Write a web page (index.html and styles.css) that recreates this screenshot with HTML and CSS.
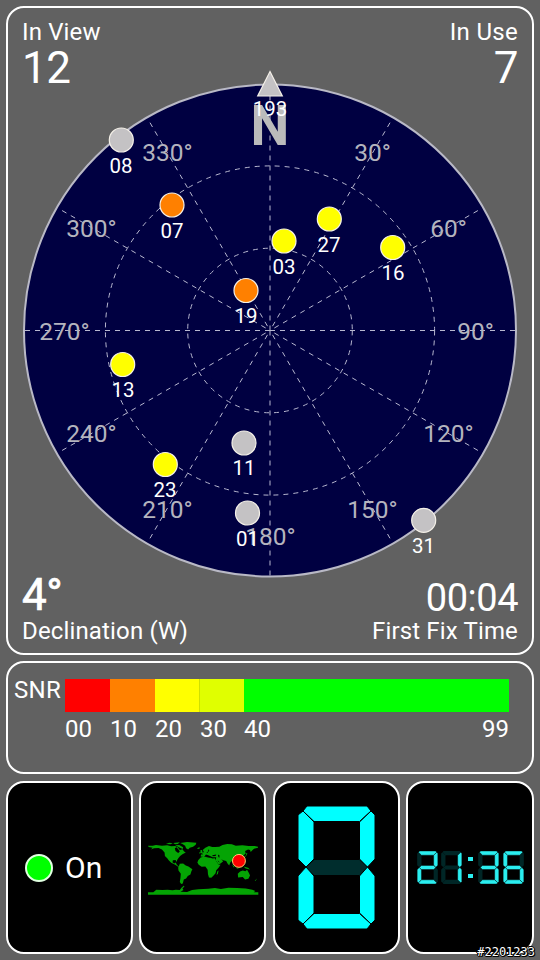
FILE: index.html
```html
<!doctype html>
<html>
  <head>
    <title>GPS Status</title>
    <meta charset="utf-8" />
    <link rel="stylesheet" href="styles.css">
  </head>
  <body>
    <div class="panel sky">
      <svg class="plot" viewBox="8 8 524 645">
        <circle class="disc" cx="270" cy="330.5" r="246" />
        <g class="grid">
          <circle cx="270" cy="330.5" r="82.3" />
          <circle cx="270" cy="330.5" r="164.6" />
          <path d="M270 330.5V84.5M270 330.5V576.5M270 330.5H24M270 330.5H516" />
          <path class="diag" d="M270 330.5L390 122.700M270 330.5L478 210.500M270 330.5L478 450.500M270 330.5L390 538.300" />
          <path class="diag" d="M270 330.5L150 538.300M270 330.5L62 450.500M270 330.5L62 210.500M270 330.5L150 122.700" />
        </g>
        <g class="deg">
          <text class="north" x="270" y="145">N</text>
          <text x="372.500" y="161">30°</text>
          <text x="448.500" y="237">60°</text>
          <text x="475.500" y="340">90°</text>
          <text x="448.500" y="442">120°</text>
          <text x="372.500" y="518">150°</text>
          <text x="270.5" y="545">180°</text>
          <text x="167.500" y="518">210°</text>
          <text x="91.500" y="442">240°</text>
          <text x="64.500" y="340">270°</text>
          <text x="91.500" y="237">300°</text>
          <text x="167.500" y="161">330°</text>
        </g>
        <g class="sat">
          <path class="gray" d="M270 71.500L282.300 96H257.700z" />
          <circle class="gray" cx="121.300" cy="140" r="12" />
          <circle class="orange" cx="172" cy="205" r="12" />
          <circle class="yellow" cx="329.300" cy="219" r="12" />
          <circle class="yellow" cx="284" cy="241" r="12" />
          <circle class="yellow" cx="392.700" cy="247.500" r="12" />
          <circle class="orange" cx="246" cy="290.500" r="12" />
          <circle class="yellow" cx="122.700" cy="364.500" r="12" />
          <circle class="gray" cx="244" cy="443" r="12" />
          <circle class="yellow" cx="165.300" cy="464.500" r="12" />
          <circle class="gray" cx="247.500" cy="513" r="12" />
          <circle class="gray" cx="423.700" cy="520.300" r="12" />
        </g>
        <g class="prn">
          <text x="270" y="116">193</text>
          <text x="121" y="173">08</text>
          <text x="172" y="238">07</text>
          <text x="329" y="252">27</text>
          <text x="284" y="274">03</text>
          <text x="393" y="280">16</text>
          <text x="246" y="323">19</text>
          <text x="123" y="397">13</text>
          <text x="244" y="475">11</text>
          <text x="165" y="497">23</text>
          <text x="247.500" y="546">01</text>
          <text x="423.500" y="553">31</text>
        </g>
      </svg>
      <div class="info top left">
        <span class="label">In View</span>
        <span class="big">12</span>
      </div>
      <div class="info top right">
        <span class="label">In Use</span>
        <span class="big">7</span>
      </div>
      <div class="info bottom left">
        <span class="big decl">4°</span>
        <span class="label">Declination (W)</span>
      </div>
      <div class="info bottom right">
        <span class="big fix">00:04</span>
        <span class="label">First Fix Time</span>
      </div>
    </div>

    <div class="panel snr">
      <span class="name">SNR</span>
      <div class="scale">
        <div class="c0"></div>
        <div class="c10"></div>
        <div class="c20"></div>
        <div class="c30"></div>
        <div class="c40"></div>
        <span>00</span>
        <span>10</span>
        <span>20</span>
        <span>30</span>
        <span class="ends"><b>40</b><b>99</b></span>
      </div>
    </div>

    <div class="tiles">
      <div class="panel tile gps">
        <div class="lamp"></div>
        <span>On</span>
      </div>
      <div class="panel tile">
        <svg class="map" viewBox="20 36 336 160">
          <g class="land">
            <path d="M22 47H36L46 45L64 47L80 46L92 49L104 48L112 52L118 60L126 58L131 65L136 68L126 73L119 78L114 84L110 90L109 96L105 90L97 91L96 97L101 101L106 98L108 103L112 108L116 110L113 111L104 105L92 99L85 92L80 85L73 78L72 68L64 59L54 54L40 55L31 59L36 53L24 51z" />
            <path d="M76 42L86 38L97 40L90 43zM98 39L118 37L112 42L104 43zM104 46L116 45L128 52L127 57L118 53z" />
            <path d="M119 39L140 36L168 38L166 44L158 50L148 53L143 59L137 55L134 47L126 42z" />
            <path d="M118 102L128 101L136 107L144 110L156 118L153 124L150 134L142 139L137 146L130 149L127 161L122 163L118 157L120 144L121 132L114 122L113 114z" />
            <path d="M170 55L177 52L179 55L173 57zM180 61L185 60L187 69L181 70zM177 68L180 66L180 70L176 71z" />
            <path d="M190 65L187 60L195 53L206 48L216 51L225 51L237 50L247 45L261 42L275 43L287 47L307 46L326 48L344 48L354 50V53L342 56L337 61L332 66L330 60L324 59L315 63L317 71L310 77L308 83L304 78L302 86L303 93L296 98L289 100L291 109L286 107L281 98L277 92L271 97L267 107L262 101L258 93L249 91L243 88L249 94L241 101L235 103L226 91L228 82L217 82L211 79L204 76L197 74L191 81L181 80L182 74L189 73L183 69L190 67z" />
            <path d="M181 83L192 80L204 81L217 86L224 85L228 94L235 104L241 105L235 114L228 121L226 130L220 137L213 144L206 143L203 133L202 120L195 110L184 111L175 105L171 98L174 90z" />
            <path d="M231 125L235 122L233 132L229 136zM275 103L284 111L281 113zM286 113L297 115L292 117zM289 104L297 102L298 110L291 110zM301 107L305 108L303 113zM310 110L324 114L330 119L317 116zM315 81L319 77L322 70L318 70L318 76L310 82z" />
            <path d="M293 132L300 125L308 122L316 124L321 120L327 130L330 137L325 147L315 149L308 142L294 143zM344 153L351 146L347 153z" />
            <path d="M22 188L38 188L47 180L66 181L81 180L96 182L106 180L118 181L123 174L130 168L132 170L126 176L129 181L120 186L140 187L155 181L174 179L204 177L224 175L242 178L265 174L291 175L317 176L337 180L346 184L341 188L355 188V195H22z" />
          </g>
          <path class="water" d="M108 52L114 59L118 65L113 69L105 63L103 55zM216 76L228 74L226 78L217 79zM233 74L238 77L237 84L234 80zM201 69L207 62L205 58L203 65L198 69zM232 91L239 98L235 96zM192 80L203 79L212 84L200 82z" />
          <circle class="spot" cx="296.500" cy="93" r="19.500" />
        </svg>
      </div>
      <div class="panel tile">
        <svg class="digit large" data-n="0"></svg>
      </div>
      <div class="panel tile clock">
        <svg class="digit" data-n="2"></svg>
        <svg class="digit" data-n="1"></svg>
        <div class="colon"></div>
        <svg class="digit" data-n="3"></svg>
        <svg class="digit" data-n="6"></svg>
      </div>
    </div>
    <div class="stamp">#2201233</div>

    <script>
     // segments a..g
     var segs = [
       '9,0 69,0 73,5 61.500,15.500 16,15.500 5,5',
       '73,5 77,9 77,53 69.500,61 61.500,53 61.500,16',
       '69.500,61 77,70 77,114 73,118 61.500,107 61.500,70',
       '16,107.500 61.500,107.500 73,118 69,123 9,123 5,118',
       '0,70 8,61 16,70 16,107 5,118 0,114',
       '0,9 5,5 16,16 16,53 8,61 0,53',
       '16,54 61.500,54 69.500,61.500 61.500,69 16,69 8,61.500'
     ];
     var digits = ['1111110', '0110000', '1101101', '1111001', '0110011',
                   '1011011', '1011111', '1110000', '1111111', '1111011'];

     var list = document.querySelectorAll('.digit');
     for(var i = 0; i < list.length; i++){
       var code = digits[list[i].getAttribute('data-n')];
       var s = '';
       // unlit segments go below the lit ones
       for(var k = 0; k < 2; k++){
         for(var j = 0; j < 7; j++){
           if(code[j] == k) s += '<polygon class="seg' + k + '" points="' + segs[j] + '"/>';
         }
       }
       list[i].setAttribute('viewBox', '0 0 77 123');
       list[i].innerHTML = s;
     }
    </script>
  </body>
</html>
```

FILE: styles.css
```css
* {
  box-sizing: border-box;
}

body {
  margin: 0;
  padding: 6px 6px 6px;
  width: 540px;
  height: 960px;
  overflow: hidden;
  background-color: #616161;
  color: #ffffff;
  font-family: Roboto, sans-serif;
  font-size: 24px;
  display: flex;
  flex-direction: column;
  gap: 6px;
}

.panel {
  border: 2px solid #ffffff;
  border-radius: 18px;
}

/* sky view */
.sky {
  height: 649px;
  display: grid;
  grid-template-columns: 1fr 1fr;
  grid-template-rows: 1fr 1fr;
}

.plot {
  grid-area: 1 / 1 / 3 / 3;
  width: 524px;
  height: 645px;
}

.disc {
  fill: #000041;
  stroke: #b9b9c6;
  stroke-width: 2;
}

.grid {
  fill: none;
  stroke: #b8b8d0;
  stroke-width: 1;
  stroke-dasharray: 5 5;
}

.diag {
  stroke-dashoffset: 5;
}

.deg text, .prn text {
  text-anchor: middle;
}

.deg {
  fill: #b4b4be;
  font-size: 24.500px;
}

.deg .north {
  font-size: 55px;
  font-weight: bold;
  fill: #bbbbbb;
}

.sat {
  stroke: #f4f0e8;
  stroke-width: 1.2;
}

.gray { fill: #c4c2c4; }
.orange { fill: #ff8000; }
.yellow { fill: #ffff00; }

.prn {
  fill: #ffffff;
  font-size: 20.5px;
}

.info {
  display: flex;
  flex-direction: column;
  padding: 10px 14px 8px;
}

.info.top { grid-row: 1; }
.info.bottom { grid-row: 2; justify-content: flex-end; }
.info.left { grid-column: 1; }
.info.right { grid-column: 2; text-align: right; }

.label {
  line-height: 28px;
  letter-spacing: 0.150px;
}

.top.right .label {
  letter-spacing: 0.300px;
}

.big {
  font-size: 44px;
  line-height: 44px;
  letter-spacing: -0.500px;
}

.decl {
  -webkit-text-stroke: 0.700px #ffffff;
}

.fix {
  font-size: 38px;
  line-height: 38px;
}

/* signal scale */
.snr {
  height: 113px;
  display: flex;
  padding: 16px 23px 0 6px;
}

.name {
  width: 51px;
  line-height: 23px;
  letter-spacing: 0.300px;
}

.scale {
  flex: 1;
  display: grid;
  grid-template-columns: 45px 45px 45px 44px 1fr;
  grid-template-rows: 33px 34px;
}

.c0 { background-color: #ff0000; }
.c10 { background-color: #ff8000; }
.c20 { background-color: #ffff00; }
.c30 { background-color: #e0ff00; border-left: 1px solid #d0e000; margin-left: -1px; }
.c40 { background-color: #00ff00; }

.scale span {
  line-height: 34px;
}

.ends {
  display: flex;
  justify-content: space-between;
}

.ends b {
  font-weight: normal;
}

/* bottom row */
.tiles {
  display: grid;
  grid-template-columns: 127px 127px 127px 1fr;
  column-gap: 6.400px;
  height: 173px;
  margin-top: 1px;
}

.tile {
  background-color: #000000;
  display: flex;
  align-items: center;
  justify-content: center;
}

.gps {
  gap: 12px;
  justify-content: flex-start;
  padding-left: 17px;
  font-size: 30px;
}

.lamp {
  width: 28px;
  height: 28px;
  border: 2px solid #e0ffe0;
  border-radius: 50%;
  background-color: #00ff00;
}

.map {
  width: 112px;
  height: 53px;
  margin-top: 2px;
}

.land { fill: #04a404; }
.water { fill: #000000; }

.spot {
  fill: #ff0000;
  stroke: #ffd070;
  stroke-width: 3;
}

.digit {
  width: 21px;
  height: 33px;
}

.digit.large {
  width: 77px;
  height: 123px;
}

.seg0 {
  fill: #002d2d;
}

.seg1 {
  fill: #00ffff;
  stroke: #000000;
  stroke-width: 1;
}

.clock {
  gap: 3.500px;
}

.clock .seg0 { fill: #002626; }

.clock .seg1 {
  fill: #2aeef0;
  stroke-width: 1.500;
}

.colon {
  width: 5px;
  height: 21px;
  margin: 0 2px;
  border-top: 4px solid #2aeef0;
  border-bottom: 4px solid #2aeef0;
}

.stamp {
  position: absolute;
  right: 5px;
  bottom: 1px;
  font: 12px/14px "DejaVu Sans Mono", monospace;
  text-shadow: 1px 0 #000, -1px 0 #000, 0 1px #000, 0 -1px #000, 1px 1px #000, -1px -1px #000;
}
```
